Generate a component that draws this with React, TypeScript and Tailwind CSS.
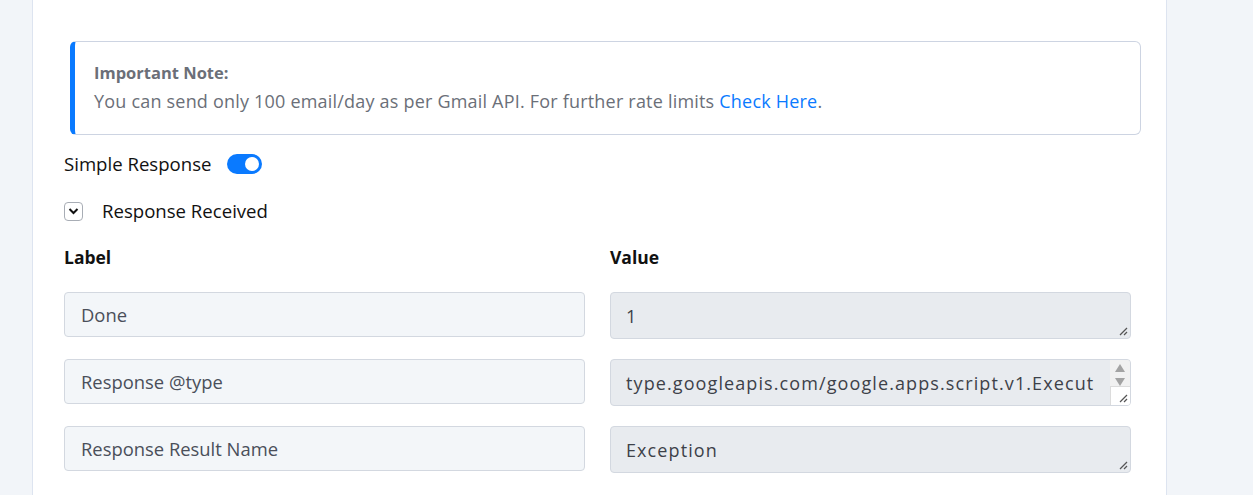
import React from "react";

const font = { fontFamily: "'Open Sans', 'Noto Sans', sans-serif" };

function Row({ label, value, scroll }: { label: string; value: string; scroll?: boolean }) {
  return (
    <div className="flex gap-[25px] mb-[20px]">
      <div className="w-[521px] h-[45px] rounded-[4px] border border-[#d3d8e0] bg-[#f3f6f9] flex items-center pl-[16px] text-[18.4px] text-[#4a4f5a]">
        {label}
      </div>
      <div className="relative w-[521px] h-[47px] rounded-[4px] border border-[#d3d8e0] bg-[#e8ebef] overflow-hidden">
        <div className="pl-[15px] pt-[10px] text-[18px] tracking-[1.1px] text-[#3d4149] whitespace-nowrap overflow-hidden">
          {value}
        </div>
        {scroll && (
          <div className="absolute right-0 top-0 bottom-0 w-[20px] bg-[#f1f1f1] flex flex-col items-center">
            <svg width="12" height="10" viewBox="0 0 12 10" className="mt-[3px]">
              <polygon points="6,1 11,9 1,9" fill="#a3a3a3" />
            </svg>
            <svg width="12" height="10" viewBox="0 0 12 10" className="mt-[4px]">
              <polygon points="1,1 11,1 6,9" fill="#a3a3a3" />
            </svg>
            <div className="absolute left-0 right-0 bottom-0 h-[19px] bg-white border-t border-l border-[#dcdcdc]" />
          </div>
        )}
        <svg width="10" height="10" viewBox="0 0 10 10" className="absolute right-[2px] bottom-[2px]">
          <line x1="2" y1="9" x2="9" y2="2" stroke="#555" strokeWidth="1.2" />
          <line x1="6" y1="9" x2="9" y2="6" stroke="#555" strokeWidth="1.2" />
        </svg>
      </div>
    </div>
  );
}

export default function App() {
  return (
    <div className="h-[495px] w-[1253px] flex bg-white overflow-hidden" style={font}>
      <div className="w-[33px] shrink-0 bg-[#f2f5f9] border-r border-[#dde4f0]" />
      <div className="w-[1133px] shrink-0 bg-white pl-[31px] pr-[25px] pt-[41px]">
        <div className="ml-[6px] h-[94px] rounded-[6px] border border-[#cdd4e2] border-l-[5px] border-l-[#0a7aff] pl-[19px] pt-[17px] text-[18px] tracking-[0.2px] leading-[28px] text-[#6b6f78]">
          <div className="font-bold text-[16.5px] tracking-normal">Important Note:</div>
          <div>
            You can send only 100 email/day as per Gmail API. For further rate limits{" "}
            <span className="text-[#0a7aff]">Check Here</span>.
          </div>
        </div>
        <div className="flex items-center h-[24px] mt-[17px]">
          <span className="text-[18.6px] text-[#111]">Simple Response</span>
          <div className="ml-[15px] w-[35px] h-[20px] rounded-full bg-[#0a7aff] flex items-center justify-end pr-[3px]">
            <div className="w-[14px] h-[14px] rounded-full bg-white" />
          </div>
        </div>
        <div className="flex items-center h-[24px] mt-[23px]">
          <div className="w-[19px] h-[19px] rounded-[4px] border border-[#a8adb5] flex items-center justify-center">
            <svg width="11" height="8" viewBox="0 0 11 8">
              <polyline points="1.5,2 5.5,6 9.5,2" fill="none" stroke="#111" strokeWidth="2" />
            </svg>
          </div>
          <span className="ml-[19px] text-[18.6px] text-[#111]">Response Received</span>
        </div>
        <div className="flex mt-[22px] h-[24px] items-center text-[17.5px] font-bold text-[#111]">
          <div className="w-[546px]">Label</div>
          <div>Value</div>
        </div>
        <div className="mt-[23px]">
          <Row label="Done" value="1" />
          <Row label="Response @type" value="type.googleapis.com/google.apps.script.v1.Execut" scroll />
          <Row label="Response Result Name" value="Exception" />
        </div>
      </div>
      <div className="flex-1 bg-[#f2f5f9] border-l border-[#dde4f0]" />
    </div>
  );
}
